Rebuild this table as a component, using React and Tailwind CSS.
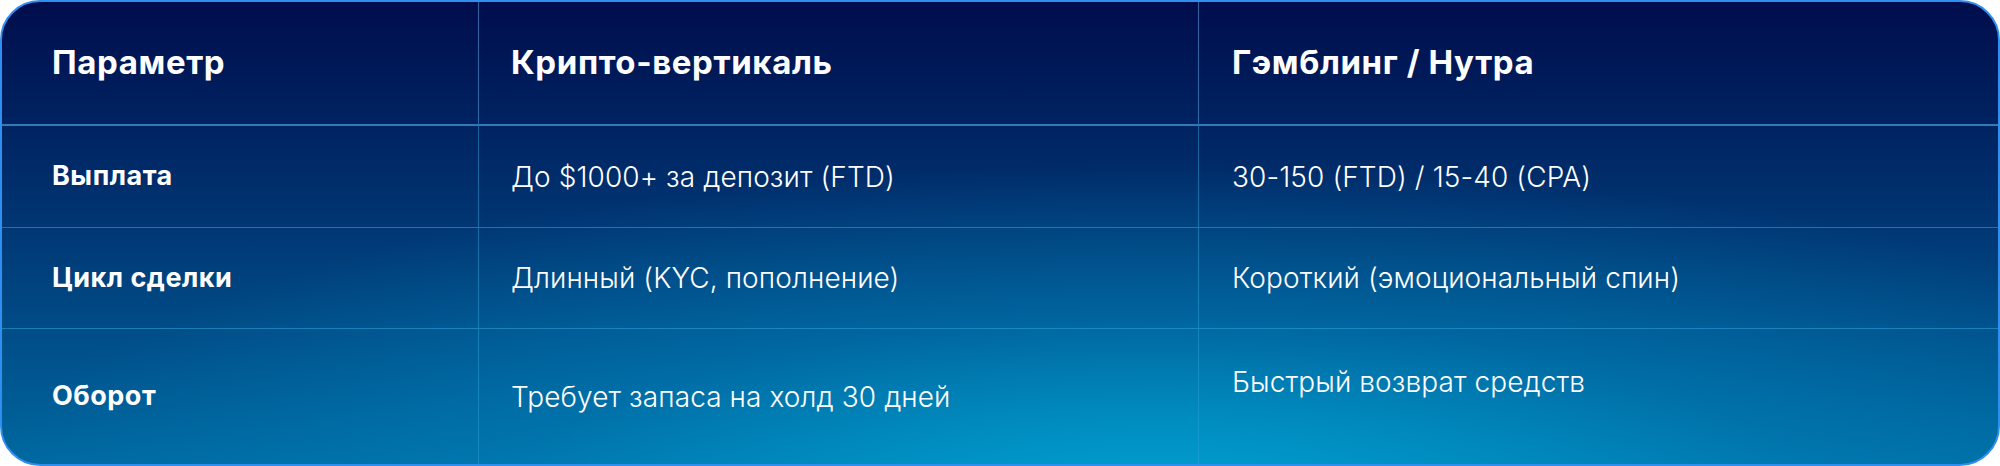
const rows = [
  {
    label: "Выплата",
    crypto: "До $1000+ за депозит (FTD)",
    gamble: "30-150 (FTD) / 15-40 (CPA)",
  },
  {
    label: "Цикл сделки",
    crypto: "Длинный (KYC, пополнение)",
    gamble: "Короткий (эмоциональный спин)",
  },
  {
    label: "Оборот",
    crypto: "Требует запаса на холд 30 дней",
    gamble: "Быстрый возврат средств",
    shiftUp: true,
  },
];

export default function App() {
  return (
    <div className="w-[2000px] h-[466px] bg-white font-['Inter',sans-serif]">
      <div className="h-full rounded-[40px] border-2 border-[#2f8ff0] overflow-hidden bg-[radial-gradient(ellipse_60%_75%_at_58%_110%,#00a4d2_0%,rgba(0,150,205,0.35)_55%,transparent_100%),linear-gradient(to_bottom,#000d4c_0%,#002a68_35%,#0068a0_100%)] text-white">
        <div className="grid h-full grid-cols-[477px_720px_1fr] grid-rows-[124px_102px_101px_1fr]">
          {/* Header */}
          <div className="flex items-center pl-[50px] border-b-2 border-[#3f8fd0]/80 border-r border-r-[#4a9ad8]/60">
            <span className="text-[33px] font-bold tracking-[0.6px]">Параметр</span>
          </div>
          <div className="flex items-center pl-[32px] border-b-2 border-[#3f8fd0]/80 border-r border-r-[#4a9ad8]/60">
            <span className="text-[33px] font-bold tracking-[0.6px]">Крипто-вертикаль</span>
          </div>
          <div className="flex items-center pl-[33px] border-b-2 border-[#3f8fd0]/80">
            <span className="text-[33px] font-bold tracking-[0.6px]">Гэмблинг / Нутра</span>
          </div>

          {rows.map((r, i) => {
            const last = i === rows.length - 1;
            const rowBorder = last ? "" : "border-b border-[#2aa0d8]/60";
            return [
              <div
                key={r.label + "a"}
                className={`flex items-center pl-[50px] border-r border-r-[#2aa0d8]/50 ${rowBorder}`}
              >
                <span className="text-[27px] font-bold tracking-[0.5px]">{r.label}</span>
              </div>,
              <div
                key={r.label + "b"}
                className={`flex items-center pl-[32px] border-r border-r-[#2aa0d8]/50 ${rowBorder}`}
              >
                <span className="text-[28px] font-light tracking-[0.1px]">{r.crypto}</span>
              </div>,
              <div
                key={r.label + "c"}
                className={`flex items-center pl-[33px] ${rowBorder} ${r.shiftUp ? "pb-[30px]" : ""}`}
              >
                <span className="text-[28px] font-light tracking-[0.1px]">{r.gamble}</span>
              </div>,
            ];
          })}
        </div>
      </div>
    </div>
  );
}
